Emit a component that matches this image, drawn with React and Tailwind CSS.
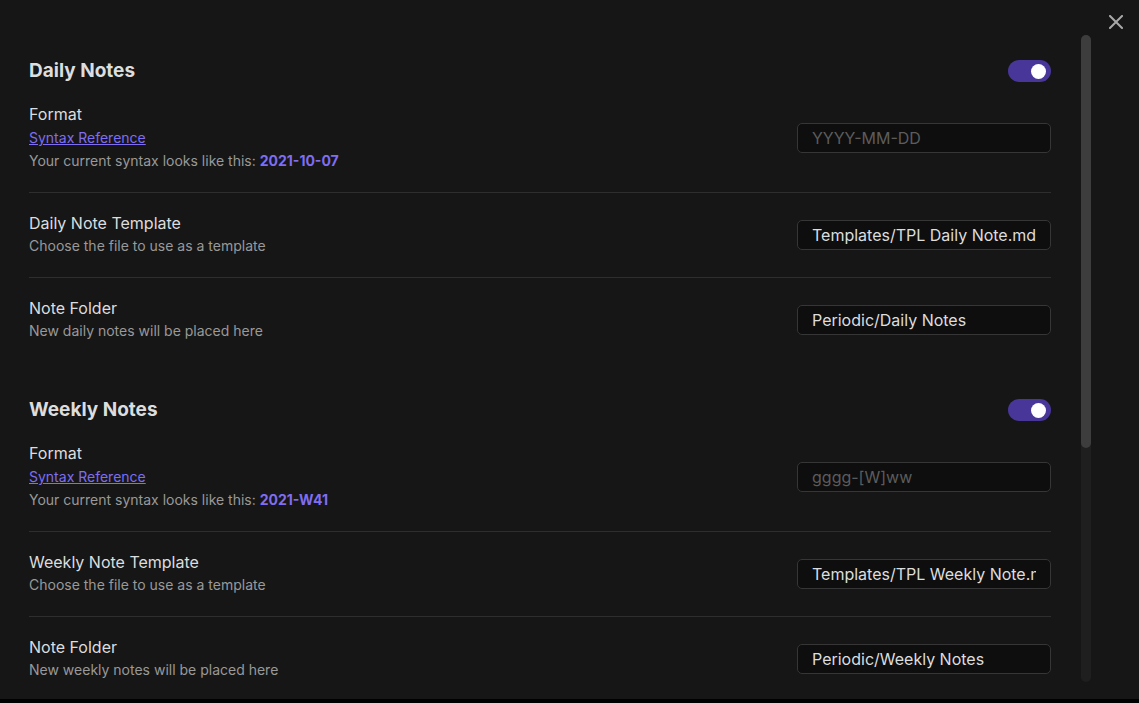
import React from "react";

const Toggle = () => (
  <div className="w-[43px] h-[22px] rounded-full bg-[#483699] flex items-center justify-end pr-[5px]">
    <div className="w-[15px] h-[15px] rounded-full bg-white" />
  </div>
);

const TextBox = ({ value, placeholder }) => (
  <div className="w-[254px] h-[30px] mt-[2px] shrink-0 rounded-[5px] border border-[#363636] bg-[#0e0e0e] px-[14px] flex items-center">
    <div className="overflow-hidden">
      <div
        className={
          "text-[16px] whitespace-nowrap " +
          (value ? "text-[#dcddde]" : "text-[#5c5c5c]")
        }
      >
        {value || placeholder}
      </div>
    </div>
  </div>
);

const Row = ({ name, desc, children, first, format }) => (
  <div
    className={
      "flex items-center justify-between pb-5 " +
      (first ? "pt-[19px]" : "pt-[18px] border-t border-[#2e2e2e]")
    }
  >
    <div className="flex flex-col">
      <div className="text-[16px] leading-6 text-[#dcddde]">{name}</div>
      {format ? (
        <>
          <a href="#" className="text-[14px] leading-6 text-[#7f6df2] underline">
            Syntax Reference
          </a>
          <div className="text-[14px] leading-[22px] text-[#999999]">
            Your current syntax looks like this:{" "}
            <span className="font-bold text-[#7f6df2]">{format}</span>
          </div>
        </>
      ) : (
        <div className="text-[14px] leading-[22px] text-[#999999]">{desc}</div>
      )}
    </div>
    {children}
  </div>
);

const Section = ({ title, format, placeholder, kind, template, folder, className }) => (
  <div className={className}>
    <div className="flex items-center justify-between h-6">
      <h2 className="text-[19px] font-bold text-[#dcddde]">{title}</h2>
      <Toggle />
    </div>
    <Row name="Format" format={format} first>
      <TextBox placeholder={placeholder} />
    </Row>
    <Row name={`${kind} Note Template`} desc="Choose the file to use as a template">
      <TextBox value={template} />
    </Row>
    <Row name="Note Folder" desc={`New ${kind.toLowerCase()} notes will be placed here`}>
      <TextBox value={folder} />
    </Row>
  </div>
);

export default function App() {
  return (
    <div
      className="h-[703px] w-[1139px] bg-black overflow-hidden"
      style={{ fontFamily: "Inter, 'Noto Sans', sans-serif" }}
    >
      <div className="h-[699px] bg-[#161616] flex">
        <div className="w-[1081px] pl-[29px] pr-[30px] pt-[59px]">
          <Section
            title="Daily Notes"
            format="2021-10-07"
            placeholder="YYYY-MM-DD"
            kind="Daily"
            template="Templates/TPL Daily Note.md"
            folder="Periodic/Daily Notes"
          />
          <Section
            className="mt-[36px]"
            title="Weekly Notes"
            format="2021-W41"
            placeholder="gggg-[W]ww"
            kind="Weekly"
            template="Templates/TPL Weekly Note.md"
            folder="Periodic/Weekly Notes"
          />
        </div>
        <div className="w-[10px] mt-[35px] h-[647px] rounded-[5px] bg-[#1f1f1f] flex flex-col">
          <div className="h-[413px] rounded-[5px] bg-[#3d3d3d]" />
        </div>
        <div className="flex-1 flex justify-end pr-[16px] pt-[15px]">
          <svg width="14" height="14" viewBox="0 0 14 14" className="text-[#a8a8a8]">
            <path d="M1 1L13 13M13 1L1 13" stroke="currentColor" strokeWidth="2" strokeLinecap="square" />
          </svg>
        </div>
      </div>
    </div>
  );
}
